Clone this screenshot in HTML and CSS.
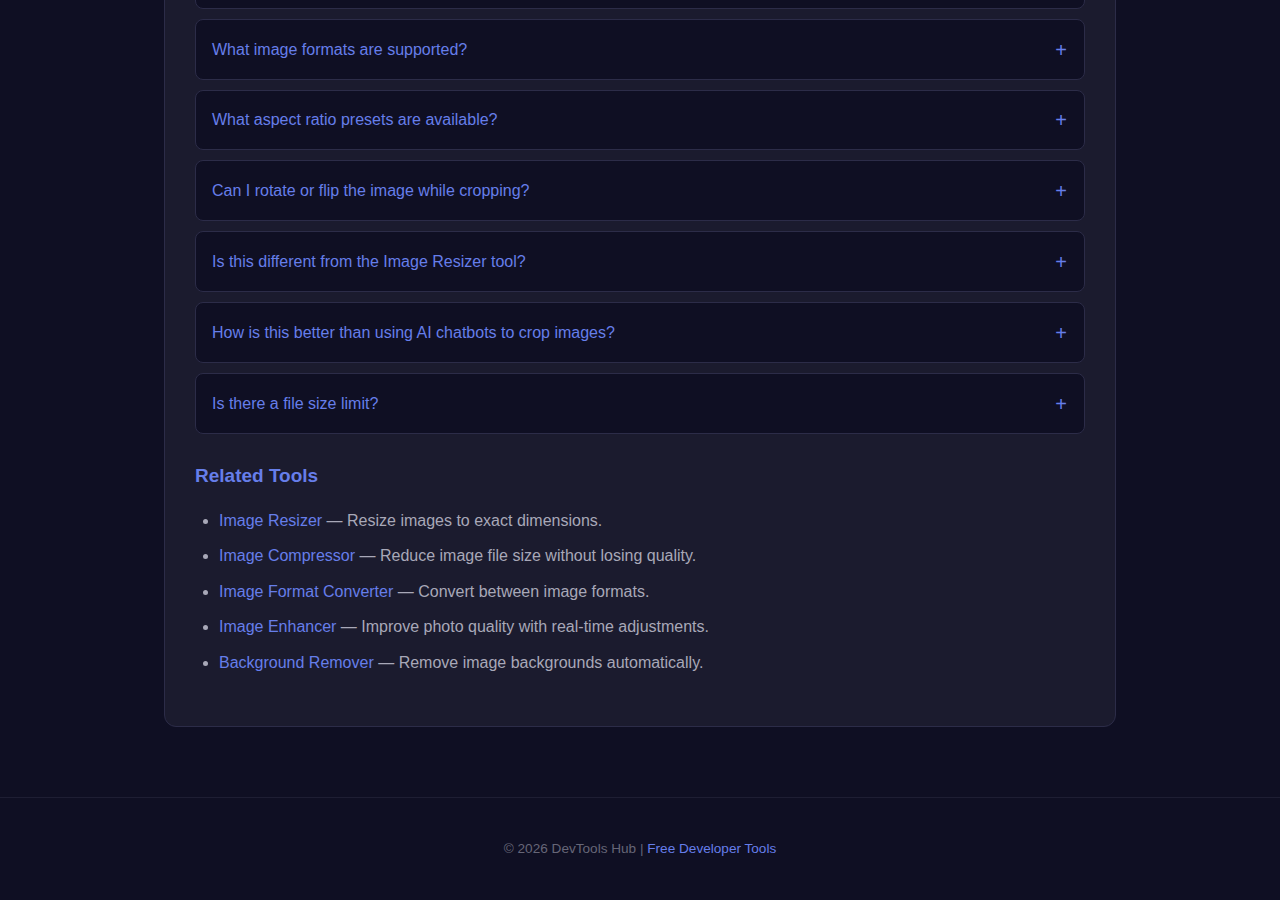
FILE: index.html
```html
<!DOCTYPE html>
<html lang="en">
<head>
<meta charset="utf-8">
<title>Image Cropper — FAQ</title>
<link rel="stylesheet" href="styles.css">
</head>
<body>
<main class="page">
  <section class="card">
    <div class="faq">
      <div class="faq-item"><span class="q">Is my image uploaded to a server?</span><span class="plus">+</span></div>
      <div class="faq-item"><span class="q">What image formats are supported?</span><span class="plus">+</span></div>
      <div class="faq-item"><span class="q">What aspect ratio presets are available?</span><span class="plus">+</span></div>
      <div class="faq-item"><span class="q">Can I rotate or flip the image while cropping?</span><span class="plus">+</span></div>
      <div class="faq-item"><span class="q">Is this different from the Image Resizer tool?</span><span class="plus">+</span></div>
      <div class="faq-item"><span class="q">How is this better than using AI chatbots to crop images?</span><span class="plus">+</span></div>
      <div class="faq-item"><span class="q">Is there a file size limit?</span><span class="plus">+</span></div>
    </div>

    <h2 class="related-title">Related Tools</h2>
    <ul class="related">
      <li><a href="#">Image Resizer</a> — Resize images to exact dimensions.</li>
      <li><a href="#">Image Compressor</a> — Reduce image file size without losing quality.</li>
      <li><a href="#">Image Format Converter</a> — Convert between image formats.</li>
      <li><a href="#">Image Enhancer</a> — Improve photo quality with real-time adjustments.</li>
      <li><a href="#">Background Remover</a> — Remove image backgrounds automatically.</li>
    </ul>
  </section>
</main>
<footer class="site-footer">
  <p>© 2026 DevTools Hub | <a href="#">Free Developer Tools</a></p>
</footer>
</body>
</html>
```

FILE: styles.css
```css
* { box-sizing: border-box; }

html, body {
  margin: 0;
  padding: 0;
  background: #0f0f23;
  font-family: "Liberation Sans", Arial, sans-serif;
  color: #a8a8b8;
}

a { color: #667eea; text-decoration: none; }

.page {
  padding: 0 0 70px;
}

.card {
  width: 952px;
  margin: -83px auto 0;
  background: #1b1b2e;
  border: 1px solid #2c2c48;
  border-radius: 12px;
  padding: 30px 30px 40px;
}

.faq-item {
  display: flex;
  justify-content: space-between;
  align-items: center;
  background: #0f0f23;
  border: 1px solid #2c2c48;
  border-radius: 8px;
  padding: 16.8px 16px 16px;
  line-height: 26px;
  margin-bottom: 10px;
  color: #667eea;
  font-size: 16px;
}

.plus {
  font-size: 20px;
  line-height: 26px;
  color: #667eea;
  padding-right: 1px;
}

.related-title {
  margin: 30px 0 20px;
  font-size: 19px;
  line-height: 24px;
  font-weight: 700;
  color: #667eea;
}

.related {
  margin: 0;
  padding-left: 24px;
  font-size: 16px;
  line-height: 25.6px;
}

.related li {
  margin-bottom: 10px;
}

.related li::marker { color: #a8a8b8; }

.site-footer {
  border-top: 1px solid #1e1e33;
  padding: 36px 0 40px;
  text-align: center;
}

.site-footer p {
  margin: 0;
  font-size: 13.6px;
  line-height: 30px;
  color: #666677;
}
```
